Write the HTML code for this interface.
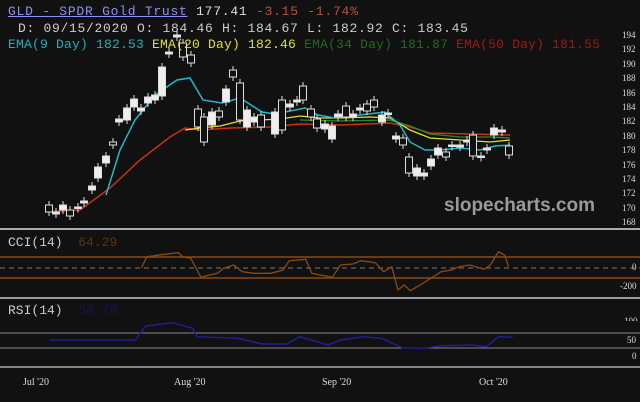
<!DOCTYPE html>
<html><head><meta charset="utf-8"><style>
html,body{margin:0;padding:0;background:#111;}
body{width:640px;height:402px;overflow:hidden;position:relative;font-family:"Liberation Mono",monospace;}
.t{position:absolute;white-space:pre;font-size:13px;line-height:14px;}
.ax{position:absolute;font-family:"Liberation Serif",serif;font-size:9px;color:#ddd;}
.bx{position:absolute;font-family:"Liberation Serif",serif;font-size:10px;color:#ddd;}
</style></head><body>
<svg id="s" width="640" height="402" style="position:absolute;left:0;top:0"></svg>
<div class="t" style="left:8px;top:5px;color:#ddd;letter-spacing:0.75px"><span style="color:#8f8ff0;text-decoration:underline">GLD - SPDR Gold Trust</span> 177.41 <span style="color:#b85040">-3.15 -1.74%</span></div>
<div class="t" style="left:18px;top:22px;color:#ccc;letter-spacing:0.7px">D: 09/15/2020 O: 184.46 H: 184.67 L: 182.92 C: 183.45</div>
<div class="t" style="left:8px;top:38px;color:#20b0b8;letter-spacing:0.2px">EMA(9 Day) 182.53 <span style="color:#e0e030">EMA(20 Day) 182.46</span> <span style="color:#1e6a1e">EMA(34 Day) 181.87</span> <span style="color:#a01818">EMA(50 Day) 181.55</span></div>
<div style="position:absolute;left:444px;top:195px;font-family:'Liberation Sans',sans-serif;font-weight:bold;font-size:19px;color:#9a9a9a">slopecharts.com</div>
<div class="t" style="left:8px;top:236px;color:#ccc">CCI(14)  <span style="color:#5a3410">64.29</span></div>
<div class="t" style="left:8px;top:304px;color:#ccc">RSI(14)  <span style="color:#14145a">58.70</span></div>
<div id="ax"></div>
<div class="bx" style="left:23px;top:377px">Jul '20</div>
<div class="bx" style="left:174px;top:377px">Aug '20</div>
<div class="bx" style="left:322px;top:377px">Sep '20</div>
<div class="bx" style="left:479px;top:377px">Oct '20</div>
<script>
var s=document.getElementById('s'),h='';
h+='<line x1="0" y1="229" x2="640" y2="229" stroke="#ddd" stroke-width="1.5"/>';
h+='<line x1="0" y1="298" x2="640" y2="298" stroke="#ccc" stroke-width="1.5"/>';
h+='<line x1="0" y1="367" x2="640" y2="367" stroke="#aaa" stroke-width="1.5"/>';
h+='<line x1="0" y1="257" x2="640" y2="257" stroke="#8a4a10" stroke-width="1.5"/>';
h+='<line x1="0" y1="278" x2="640" y2="278" stroke="#8a4a10" stroke-width="1.5"/>';
h+='<line x1="0" y1="268" x2="640" y2="268" stroke="#777" stroke-dasharray="5,4"/>';
h+='<line x1="0" y1="333" x2="640" y2="333" stroke="#888"/>';
h+='<line x1="0" y1="348" x2="640" y2="348" stroke="#888"/>';
function pl(p,c,w){return '<polyline fill="none" stroke="'+c+'" stroke-width="'+w+'" points="'+p.map(function(a){return a.join(',')}).join(' ')+'"/>';}
var red=[[45,212],[80,210],[110,188],[140,160],[170,137],[185,128],[200,130],[230,128],[270,127],[300,124],[340,125],[390,123],[410,127],[430,133],[470,134],[510,135]];
var grn=[[300,120],[340,121],[390,120],[410,126],[430,134],[460,137],[490,137],[510,138]];
var yel=[[185,130],[200,128],[220,126],[240,121],[260,120],[280,119],[300,116],[320,118],[340,118],[370,117],[390,118],[410,130],[430,138],[460,140],[490,142],[510,140]];
var cy=[[106,195],[120,150],[135,120],[155,95],[177,80],[190,78],[203,100],[222,103],[240,98],[262,112],[275,114],[290,111],[305,108],[318,115],[335,118],[360,115],[385,112],[400,125],[410,142],[425,150],[440,150],[460,148],[480,150],[495,146],[510,145]];
h+=pl(red,'#c83018',1.5)+pl(grn,'#2a8a2a',1.3)+pl(yel,'#e0e030',1.3)+pl(cy,'#20b8c8',1.5);
var c=[[49,205,212,0],[56,212,214,1],[63,205,210,1],[70,210,216,0],[78,207,208,1],[84,201,203,1],[92,186,190,1],[98,167,178,1],[106,156,163,1],[113,142,145,0],[119,119,122,1],[127,108,120,1],[134,99,107,1],[141,108,111,1],[148,97,103,1],[155,95,100,1],[162,67,96,1],[169,52,54,1],[177,35,37,1],[183,43,57,0],[191,55,63,0],[198,109,127,0],[204,117,142,0],[212,112,125,1],[219,111,117,0],[226,89,102,1],[233,70,77,0],[240,83,120,0],[247,110,127,1],[254,117,122,1],[261,115,127,0],[275,112,134,1],[282,100,130,0],[290,104,107,1],[297,100,102,1],[303,86,100,0],[311,109,117,0],[317,119,128,0],[325,124,129,1],[332,126,139,1],[338,114,117,1],[346,106,117,0],[353,114,117,1],[360,108,110,1],[367,104,111,0],[374,100,107,0],[382,115,122,1],[388,113,114,1],[396,136,139,1],[403,138,145,0],[409,157,173,0],[417,168,176,1],[424,173,176,1],[431,159,166,1],[438,148,155,1],[446,152,157,0],[452,145,146,1],[460,145,147,1],[467,140,142,1],[473,135,156,0],[481,156,157,1],[487,148,150,1],[494,128,135,1],[502,130,132,1],[509,146,155,0]];
c.forEach(function(a){var x=a[0],t=a[1],b=a[2];if(b-t<1.5)b=t+1.5;
h+='<line x1="'+x+'" y1="'+(t-4)+'" x2="'+x+'" y2="'+(b+4)+'" stroke="#ddd"/>';
h+='<rect x="'+(x-3.5)+'" y="'+t+'" width="7" height="'+(b-t)+'" fill="'+(a[3]?'#eee':'#111')+'" stroke="#ddd"/>';});
var cci=[[345,143],[358,110],[400,103],[435,98],[445,110],[465,115],[490,172],[510,165],[530,160],[545,145],[570,135],[590,155],[620,160],[660,160],[690,150],[705,122],[745,118],[760,160],[780,165],[810,172],[830,135],[860,132],[880,122],[915,128],[935,155],[955,140],[970,210],[985,195],[1000,212],[1020,198],[1050,175],[1075,155],[1100,150],[1120,140],[1145,135],[1180,148],[1195,135],[1215,95],[1230,105],[1240,140]].map(function(a){return [(a[0]/2.4375).toFixed(1),(220+a[1]/3).toFixed(1)]});
h+=pl(cci,'#8a4a10',1.3);
var rsi=[[120,360],[330,360],[355,318],[420,308],[470,325],[480,350],[580,355],[640,372],[700,372],[730,350],[800,375],[830,360],[885,350],[930,355],[980,383],[1030,385],[1080,377],[1150,375],[1185,380],[1215,350],[1250,352]].map(function(a){return [(a[0]/2.4375).toFixed(1),(220+a[1]/3).toFixed(1)]});
h+=pl(rsi,'#1e1e9a',1.5);
s.innerHTML=h;
var ax='',L=[194,192,190,188,186,184,182,180,178,176,174,172,170,168];
L.forEach(function(v){var y=35+(194-v)*7.2-5;ax+='<div class="ax" style="left:622px;top:'+y+'px">'+v+'</div>';});
ax+='<div class="ax" style="left:632px;top:262px">0</div><div class="ax" style="left:620px;top:281px">-200</div>';
ax+='<div class="ax" style="left:624px;top:316px;height:5px;overflow:hidden">100</div><div class="ax" style="left:627px;top:335px">50</div><div class="ax" style="left:632px;top:351px">0</div>';
document.getElementById('ax').innerHTML=ax;
</script>
</body></html>
